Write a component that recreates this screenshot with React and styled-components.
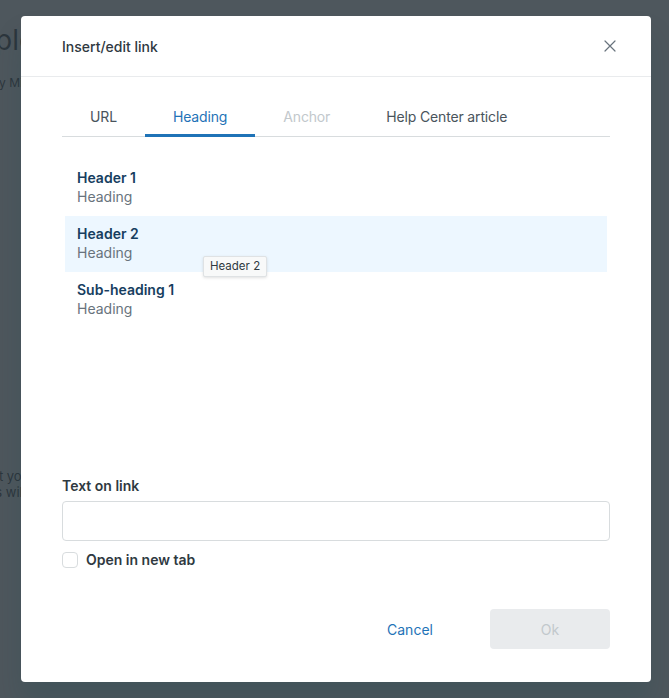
import React from 'react';
import styled, {createGlobalStyle} from 'styled-components';

const GlobalStyle = createGlobalStyle`
  html, body {
    margin: 0;
    padding: 0;
  }
  body {
    font-family: Inter, "Noto Sans", "Liberation Sans", sans-serif;
    -webkit-font-smoothing: antialiased;
  }
  * { box-sizing: border-box; }
`;

const headings = [
  {title: 'Header 1', sub: 'Heading'},
  {title: 'Header 2', sub: 'Heading', hover: true},
  {title: 'Sub-heading 1', sub: 'Heading'},
];

const tabs = [
  {label: 'URL'},
  {label: 'Heading', active: true},
  {label: 'Anchor', disabled: true},
  {label: 'Help Center article'},
];

const CloseIcon = () => (
  <svg width="12" height="12" viewBox="0 0 12 12" fill="none">
    <path d="M1 1l10 10M11 1L1 11" stroke="#68737d" strokeWidth="1.2" strokeLinecap="round"/>
  </svg>
);

export default () => {
  return (
    <>
      <GlobalStyle/>
      <Page>
        <PageInner>
          <PageTitle>Explore</PageTitle>
          <PageMeta>by Mia</PageMeta>
          <PageBlock>
            <PageText>Post your</PageText>
            <PageText>This will</PageText>
          </PageBlock>
        </PageInner>

        <Overlay>
          <Modal>
            <Header>
              <Title>Insert/edit link</Title>
              <CloseButton aria-label="Close"><CloseIcon/></CloseButton>
            </Header>

            <Body>
              <TabList>
                {tabs.map(t => (
                  <Tab key={t.label} active={t.active} disabled={t.disabled}>{t.label}</Tab>
                ))}
              </TabList>

              <Panel>
                <List>
                  {headings.map(h => (
                    <Item key={h.title} hover={h.hover}>
                      <ItemTitle>{h.title}</ItemTitle>
                      <ItemSub>{h.sub}</ItemSub>
                      {h.hover ? <Tooltip>{h.title}</Tooltip> : null}
                    </Item>
                  ))}
                </List>
              </Panel>

              <Label>Text on link</Label>
              <Input type="text"/>

              <CheckRow>
                <CheckBox/>
                <CheckLabel>Open in new tab</CheckLabel>
              </CheckRow>
            </Body>

            <Footer>
              <LinkButton>Cancel</LinkButton>
              <PrimaryButton disabled>Ok</PrimaryButton>
            </Footer>
          </Modal>
        </Overlay>
      </Page>
    </>
  );
};

const Page = styled.div`
  position: relative;
  width: 100vw;
  height: 100vh;
  overflow: hidden;
  background: #ffffff;
  color: #1e252b;
`;

const PageInner = styled.div`
  margin-left: -37px;
  padding-top: 24px;
  display: flex;
  flex-direction: column;
`;

const PageTitle = styled.div`
  font-size: 28px;
  line-height: 32px;
  white-space: nowrap;
`;

const PageMeta = styled.div`
  font-size: 12px;
  line-height: 16px;
  margin-top: 19px;
  padding-left: 29px;
  white-space: nowrap;
`;

const PageBlock = styled.div`
  margin-top: 377px;
  padding-left: 13px;
  display: flex;
  flex-direction: column;
`;

const PageText = styled.div`
  font-size: 13px;
  line-height: 16px;
  white-space: nowrap;
`;

const Overlay = styled.div`
  position: absolute;
  inset: 0;
  background: rgba(47, 57, 65, 0.85);
  display: flex;
  justify-content: flex-start;
  align-items: flex-start;
  padding: 16px 0 0 21px;
`;

const Modal = styled.div`
  width: 630px;
  height: 666px;
  background: #fff;
  border-radius: 4px;
  box-shadow: 0 20px 28px rgba(4, 68, 77, 0.15);
  display: flex;
  flex-direction: column;
`;

const Header = styled.div`
  height: 61px;
  padding: 0 27px 0 41px;
  border-bottom: 1px solid #e9ebed;
  display: flex;
  align-items: center;
  justify-content: space-between;
`;

const Title = styled.div`
  font-size: 14px;
  font-weight: 500;
  color: #2f3941;
  padding-top: 1px;
`;

const CloseButton = styled.button`
  width: 28px;
  height: 28px;
  border: none;
  background: transparent;
  display: flex;
  align-items: center;
  justify-content: center;
  padding: 0;
  cursor: pointer;
`;

const Body = styled.div`
  padding: 20px 41px 0;
  display: flex;
  flex-direction: column;
`;

const TabList = styled.div`
  display: flex;
  height: 40px;
  border-bottom: 1px solid #d8dcde;
`;

const Tab = styled.div`
  padding: 0 28px;
  display: flex;
  align-items: center;
  font-size: 14px;
  letter-spacing: -0.15px;
  color: ${p => p.disabled ? '#c2c8cc' : p.active ? '#1f73b7' : '#49545c'};
  border-bottom: 3px solid ${p => p.active ? '#1f73b7' : 'transparent'};
  margin-bottom: -1px;
  padding-top: 2px;
  cursor: pointer;
`;

const Panel = styled.div`
  height: 339px;
  padding: 23px 3px 0;
`;

const List = styled.div`
  display: flex;
  flex-direction: column;
`;

const Item = styled.div`
  position: relative;
  height: 56px;
  padding: 8px 12px;
  background: ${p => p.hover ? '#edf7ff' : 'transparent'};
  display: flex;
  flex-direction: column;
`;

const ItemTitle = styled.div`
  font-size: 14px;
  line-height: 19px;
  font-weight: 600;
  color: #173e5f;
`;

const ItemSub = styled.div`
  font-size: 14px;
  line-height: 19px;
  color: #68737d;
`;

const Tooltip = styled.div`
  position: absolute;
  left: 138px;
  top: 40px;
  padding: 0 6px;
  height: 21px;
  line-height: 19px;
  font-size: 11.5px;
  color: #2f3941;
  background: #f8f9f9;
  border: 1px solid #dfe2e4;
  border-radius: 2px;
  box-shadow: 0 1px 3px rgba(0, 0, 0, 0.12);
  white-space: nowrap;
  z-index: 2;
`;

const Label = styled.div`
  font-size: 14px;
  line-height: 20px;
  font-weight: 600;
  color: #2f3941;
  margin-bottom: 5px;
`;

const Input = styled.input`
  height: 40px;
  width: 100%;
  border: 1px solid #d8dcde;
  border-radius: 4px;
  padding: 0 12px;
  font-size: 14px;
  outline: none;
`;

const CheckRow = styled.div`
  margin-top: 10px;
  display: flex;
  align-items: center;
  gap: 8px;
`;

const CheckBox = styled.span`
  width: 16px;
  height: 16px;
  border: 1px solid #d8dcde;
  border-radius: 4px;
  background: #fff;
`;

const CheckLabel = styled.span`
  font-size: 14px;
  font-weight: 600;
  color: #2f3941;
`;

const Footer = styled.div`
  margin-top: auto;
  padding: 0 41px 33px;
  display: flex;
  justify-content: flex-end;
  gap: 20px;
`;

const LinkButton = styled.button`
  width: 120px;
  height: 40px;
  border: none;
  background: transparent;
  color: #1f73b7;
  font-family: inherit;
  font-size: 14px;
  cursor: pointer;
`;

const PrimaryButton = styled.button`
  width: 120px;
  height: 40px;
  border: none;
  border-radius: 4px;
  background: #e9ebed;
  color: #c2c8cc;
  font-family: inherit;
  font-size: 14px;
`;
